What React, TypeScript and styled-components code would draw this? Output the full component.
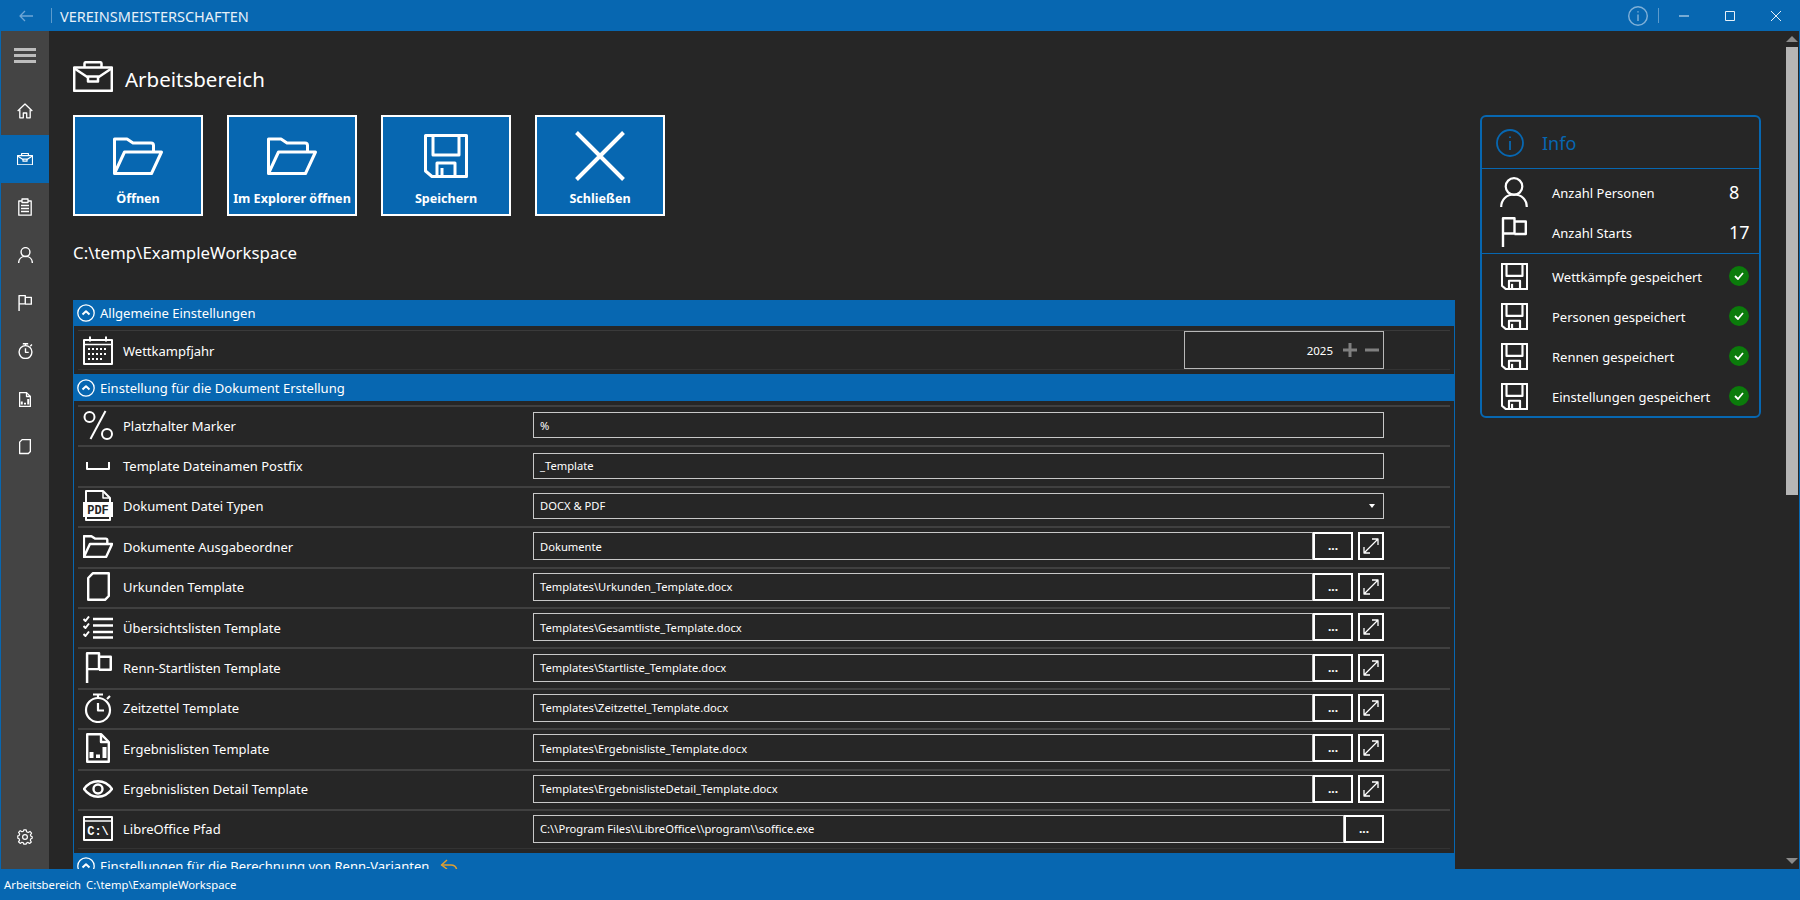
import React from 'react';
import styled, { createGlobalStyle } from 'styled-components';

const blue = '#0767b1';
const font = '"Noto Sans", "Open Sans", sans-serif';

const Global = createGlobalStyle`
  html, body { margin: 0; padding: 0; height: 100%; background: #262626; overflow: hidden; }
  * { box-sizing: border-box; }
  #root { height: 100%; }
`;

const Svg = styled.svg`
  display: block;
  flex-shrink: 0;
  fill: none;
  stroke: currentColor;
  stroke-linejoin: round;
`;

type IconProps = { w?: number; sw?: number };

const BriefcaseIcon = ({ w = 40, sw = 2.5 }: IconProps) => (
  <Svg width={w} height={(w * 31) / 40} viewBox="0 0 40 31" strokeWidth={sw}>
    <path d="M1.2 6.5H38.8V29.8H1.2Z" />
    <path d="M11.5 6V2.5Q11.5 1.2 13 1.2H27Q28.5 1.2 28.5 2.5V6" />
    <path d="M1.5 7.5L15 16.5M38.5 7.5L25 16.5" />
    <path d="M15 15.5H25V20.5H15Z" />
  </Svg>
);
const FolderIcon = ({ w = 50, sw = 3 }: IconProps) => (
  <Svg width={w} height={(w * 38) / 50} viewBox="0 0 50 38" strokeWidth={sw}>
    <path d="M1.5 36.5V2H14L20 6H38Q40.5 6 40.5 8.5V15" />
    <path d="M1.5 36.5L11.5 15H48.5L38.5 36.5Z" />
  </Svg>
);
const SaveIcon = ({ w = 44, sw = 3 }: IconProps) => (
  <Svg width={w} height={w} viewBox="0 0 44 44" strokeWidth={sw}>
    <path d="M1.5 1.5H42.5V42.5H8L1.5 37Z" />
    <path d="M9 1.5V21H35V1.5" />
    <path d="M13 42.5V29H31V42.5" />
    <path d="M18 34V42" />
  </Svg>
);
const CloseIcon = ({ w = 50, sw = 4 }: IconProps) => (
  <Svg width={w} height={w} viewBox="0 0 50 50" strokeWidth={sw}>
    <path d="M1.5 1.5L48.5 48.5M48.5 1.5L1.5 48.5" />
  </Svg>
);
const InfoIcon = ({ w = 28, sw = 1.8 }: IconProps) => (
  <Svg width={w} height={w} viewBox="0 0 28 28" strokeWidth={sw}>
    <circle cx="14" cy="14" r="13" />
    <path d="M14 12V21" />
    <path d="M14 7.5V9" />
  </Svg>
);
const PersonIcon = ({ w = 28, sw = 2.2 }: IconProps) => (
  <Svg width={w} height={(w * 30) / 28} viewBox="0 0 28 30" strokeWidth={sw}>
    <circle cx="14" cy="9.5" r="8.3" />
    <path d="M1.2 30C1.2 22.5 6.5 17.5 14 17.5S26.8 22.5 26.8 30" />
  </Svg>
);
const FlagIcon = ({ w = 27, sw = 2.4 }: IconProps) => (
  <Svg width={w} height={(w * 30) / 26} viewBox="0 0 26 30" strokeWidth={sw}>
    <path d="M2 30V1.2H13.5V16.5H2" />
    <path d="M13.5 4.5H24.8V17H13.5" />
  </Svg>
);
const TimerIcon = ({ w = 28, sw = 2.2 }: IconProps) => (
  <Svg width={w} height={(w * 30) / 28} viewBox="0 0 28 30" strokeWidth={sw}>
    <circle cx="14" cy="17" r="12" />
    <path d="M9 1.5H19M14 1.5V5M23 6L26 3" />
    <path d="M14 10V17.5H20" />
  </Svg>
);
const ReportIcon = ({ w = 24, sw = 2.4 }: IconProps) => (
  <Svg width={w} height={(w * 30) / 24} viewBox="0 0 24 30" strokeWidth={sw}>
    <path d="M1.2 1.2H15L22.8 9V28.8H1.2Z" />
    <path d="M15 1.2V9H22.8" />
    <path d="M5.5 25V19M12 25V21.5M18.5 25V14" strokeWidth="4" />
  </Svg>
);
const DocIcon = ({ w = 23, sw = 2.4 }: IconProps) => (
  <Svg width={w} height={(w * 29) / 23} viewBox="0 0 23 29" strokeWidth={sw}>
    <path d="M6 1.2H21.8V24L18 27.8H1.2V6Z" />
  </Svg>
);
const HomeIcon = ({ w = 16 }: IconProps) => (
  <Svg width={w} height={w} viewBox="0 0 16 16" strokeWidth={1.3}>
    <path d="M.7 8L8 1L15.3 8" />
    <path d="M2.8 6.5V14.8H6.3V10H9.7V14.8H13.2V6.5" />
  </Svg>
);
const ClipboardIcon = ({ w = 14 }: IconProps) => (
  <Svg width={w} height={(w * 18) / 14} viewBox="0 0 14 18" strokeWidth={1.3}>
    <path d="M4 3H.8V17.2H13.2V3H10" />
    <path d="M4 1H10V4.5H4Z" />
    <path d="M3 7.5H11M3 10.5H11M3 13.5H11" />
  </Svg>
);
const GearIcon = ({ w = 16 }: IconProps) => (
  <Svg width={w} height={w} viewBox="0 0 16 16" strokeWidth={1.2}>
    <circle cx="8" cy="8" r="2.4" />
    <path d="M6.8.8H9.2L9.6 2.8L11.2 3.5L13 2.4L14.6 4.1L13.4 5.8L14 7.3L15.2 7.8V9.3L13.9 9.7L13.3 11.2L14.3 13L12.6 14.5L11 13.4L9.5 14L9.2 15.2H6.8L6.4 13.9L4.9 13.3L3.2 14.4L1.5 12.8L2.6 11.1L2 9.6L.8 9.2V6.9L2.1 6.5L2.7 5L1.6 3.3L3.2 1.7L5 2.8L6.4 2.2Z" />
  </Svg>
);
const CalendarIcon = () => (
  <Svg width={30} height={29} viewBox="0 0 30 29" strokeWidth={2}>
    <path d="M1 4H29V28H1Z" />
    <path d="M1 8.5H29" strokeWidth="1.5" />
    <path d="M7 .5V5.5M23 .5V5.5" />
    <path d="M5 13H25M5 18H25M5 23H20" strokeWidth="2" strokeDasharray="2 2" />
  </Svg>
);
const PercentIcon = () => (
  <Svg width={30} height={30} viewBox="0 0 30 30" strokeWidth={2}>
    <circle cx="6.5" cy="7" r="5" />
    <circle cx="24" cy="24" r="5" />
    <path d="M22.5 1L7.5 29" />
  </Svg>
);
const SpaceIcon = () => (
  <Svg width={24} height={8} viewBox="0 0 24 8" strokeWidth={2}>
    <path d="M1 0V7H23V0" />
  </Svg>
);
const Mark = styled.text`
  fill: currentColor;
  stroke: none;
  font-family: "Liberation Mono", monospace;
  font-weight: 700;
`;
const PdfMark = styled(Mark)`
  fill: #262626;
`;
const PdfIcon = () => (
  <Svg width={30} height={31} viewBox="0 0 30 31" strokeWidth={2}>
    <path d="M3 13V1H20L27 8V13" />
    <path d="M20 1V8H27" strokeWidth="1.5" />
    <path d="M3 26V30H27V26" />
    <path d="M.5 13H29.5V26H.5Z" fill="currentColor" />
    <PdfMark x="15" y="23.5" textAnchor="middle" fontSize="12">PDF</PdfMark>
  </Svg>
);
const ListIcon = () => (
  <Svg width={30} height={23} viewBox="0 0 30 23" strokeWidth={2.4}>
    <path d="M10 3H30M10 9.5H30M10 16H30M10 21.5H30" />
    <path d="M.5 3L2.5 5L6 .5M.5 10L2.5 12L6 7.5M.5 18L2.5 20L6 15.5" strokeWidth="2" />
  </Svg>
);
const EyeIcon = () => (
  <Svg width={30} height={18} viewBox="0 0 30 18" strokeWidth={2.4}>
    <path d="M1 9C5 3.5 9.5 1.3 15 1.3S25 3.5 29 9C25 14.5 20.5 16.7 15 16.7S5 14.5 1 9Z" />
    <circle cx="15" cy="9" r="4.5" />
  </Svg>
);
const TerminalIcon = () => (
  <Svg width={30} height={25} viewBox="0 0 30 25" strokeWidth={2}>
    <path d="M1 1H29V24H1Z" />
    <path d="M1 5H29" strokeWidth="1.5" />
    <Mark x="15" y="19" textAnchor="middle" fontSize="12">C:\</Mark>
  </Svg>
);
const ChevronCircle = () => (
  <Svg width={18} height={18} viewBox="0 0 18 18" strokeWidth={1.3}>
    <circle cx="9" cy="9" r="8.2" />
    <path d="M5.5 10.5L9 7.2L12.5 10.5" strokeWidth="2" />
  </Svg>
);
const ExpandIcon = () => (
  <Svg width={16} height={16} viewBox="0 0 16 16" strokeWidth={1.3}>
    <path d="M1 15L15 1M9 1H15V7M1 9V15H7" />
  </Svg>
);
const UndoIcon = () => (
  <Svg width={18} height={14} viewBox="0 0 18 14" strokeWidth={1.5}>
    <path d="M7 1L1.5 6L7 10" />
    <path d="M1.5 6H11C15 6 17 9 17 13.5" />
  </Svg>
);

const Page = styled.div`
  display: flex;
  flex-direction: column;
  height: 900px;
  overflow: hidden;
  font-family: ${font};
  color: #fff;
  background: ${blue};
`;

const TitleBar = styled.div`
  display: flex;
  align-items: center;
  flex: 0 0 31px;
  padding: 0 1px 0 19px;
  background: ${blue};
`;
const BackButton = styled.div`
  display: flex;
  color: #6ea6d6;
`;
const TitleDivider = styled.div<{ $left: number; $right: number }>`
  width: 1px;
  height: 15px;
  margin: 0 ${({ $right }) => $right}px 0 ${({ $left }) => $left}px;
  background: #5c9bcd;
`;
const TitleText = styled.div`
  font-size: 14.5px;
  color: #e6f0f8;
`;
const WindowControls = styled.div`
  display: flex;
  align-items: center;
  margin-left: auto;
`;
const HelpButton = styled.div`
  display: flex;
  color: #7fb0d8;
`;
const ControlButton = styled.div`
  display: flex;
  align-items: center;
  justify-content: center;
  width: 46px;
  height: 31px;
  color: #e6f0f8;
`;

const Middle = styled.div`
  display: flex;
  flex: 1;
  min-height: 0;
  padding: 0 1px;
  background: ${blue};
`;

const Sidebar = styled.nav`
  display: flex;
  flex-direction: column;
  flex: 0 0 48px;
  background: #444;
`;
const MenuButton = styled.div`
  display: flex;
  flex-direction: column;
  gap: 3px;
  height: 56px;
  padding: 17px 13px 0;
`;
const MenuLine = styled.div`
  height: 3px;
  background: #bdbdbd;
`;
const NavItem = styled.div<{ $active?: boolean }>`
  display: flex;
  align-items: center;
  justify-content: center;
  height: 48px;
  background: ${({ $active }) => ($active ? blue : 'transparent')};
`;
const NavFooter = styled(NavItem)`
  margin-top: auto;
  margin-bottom: 8px;
`;

const Main = styled.main`
  display: flex;
  flex: 1;
  min-width: 0;
  overflow: hidden;
  background: #262626;
`;
const Content = styled.div`
  flex: 0 0 1382px;
  margin-left: 24px;
  padding-top: 30px;
`;
const Heading = styled.div`
  display: flex;
  align-items: center;
  gap: 12px;
  height: 31px;
`;
const HeadingText = styled.div`
  font-size: 20.5px;
  margin-top: 5px;
`;
const ActionRow = styled.div`
  display: flex;
  gap: 24px;
  margin-top: 23px;
`;
const ActionButton = styled.button`
  position: relative;
  display: flex;
  flex-direction: column;
  align-items: center;
  width: 130px;
  height: 101px;
  padding: 0;
  border: 2px solid #fff;
  background: ${blue};
  color: #fff;
  font-family: ${font};
`;
const ActionIconBox = styled.div`
  display: flex;
  align-items: center;
  justify-content: center;
  height: 72px;
  padding-top: 6px;
`;
const ActionLabel = styled.div`
  font-size: 12.6px;
  font-weight: 700;
  white-space: nowrap;
  line-height: 20px;
`;
const PathText = styled.div`
  margin-top: 26px;
  font-size: 16.85px;
  line-height: 22px;
`;

const Section = styled.section`
  margin-top: 36px;
`;
const SectionNext = styled.section``;
const SectionHeader = styled.div<{ $h?: number }>`
  display: flex;
  align-items: center;
  gap: 5px;
  height: ${({ $h }) => $h ?? 26}px;
  padding-left: 4px;
  background: ${blue};
  font-size: 13.05px;
`;
const UndoMark = styled.span`
  display: flex;
  margin-left: 6px;
  color: #e0a030;
`;
const SectionBody = styled.div`
  padding: 4px 4px;
  border-left: 1px solid ${blue};
  border-right: 1px solid ${blue};
`;
const Row = styled.div`
  display: grid;
  grid-template-columns: 45px 410px 851px;
  align-items: center;
  height: 40.4px;
  padding-bottom: 2px;
  border-top: 2px solid #404040;
`;
const PlainRow = styled(Row)`
  height: 40px;
  padding-bottom: 0;
  border-top: 1px solid #3a3a3a;
  border-bottom: 1px solid #333;
`;
const LastRow = styled(Row)`
  height: 40px;
  padding-bottom: 1px;
  border-bottom: 1px solid #333;
`;
const IconCell = styled.div`
  display: flex;
  align-items: center;
  justify-content: center;
  width: 30px;
  margin-left: 5px;
`;
const RowLabel = styled.div`
  margin-top: 1px;
  font-size: 13px;
`;
const Field = styled.div`
  display: flex;
  align-items: center;
  flex: 1;
  height: 100%;
  padding: 0 6px;
  border: 1px solid #c8c8c8;
  font-size: 11.2px;
`;
const FieldRow = styled.div<{ $h?: number }>`
  display: flex;
  height: ${({ $h }) => $h ?? 26}px;
`;
const YearCell = styled.div`
  display: flex;
  justify-content: flex-end;
  align-self: stretch;
`;
const YearBox = styled.div`
  display: flex;
  align-items: center;
  justify-content: flex-end;
  width: 200px;
  gap: 10px;
  padding-right: 4px;
  border: 1px solid #b8b8b8;
  font-size: 11.5px;
`;
const Stepper = styled.div`
  display: flex;
  gap: 8px;
  color: #808080;
`;
const ComboArrow = styled.div`
  width: 0;
  height: 0;
  margin-left: auto;
  margin-right: 2px;
  border-left: 3.5px solid transparent;
  border-right: 3.5px solid transparent;
  border-top: 4px solid #fff;
`;
const DotsButton = styled.div`
  display: flex;
  align-items: flex-end;
  justify-content: center;
  flex: 0 0 40px;
  padding-bottom: 4px;
  border: 2px solid #fff;
  font-size: 12px;
  line-height: 16px;
  font-weight: 700;
`;
const ExpandButton = styled.div`
  display: flex;
  align-items: center;
  justify-content: center;
  flex: 0 0 26px;
  margin-left: 5px;
  border: 2px solid #fff;
`;

const InfoPanel = styled.aside`
  flex: 0 0 281px;
  min-width: 0;
  height: 303px;
  margin: 84px 0 0 25px;
  border: 2px solid ${blue};
  border-radius: 6px;
`;
const InfoHeader = styled.div`
  display: flex;
  align-items: center;
  height: 52px;
  padding-left: 14px;
  color: ${blue};
  border-bottom: 1px solid ${blue};
`;
const InfoTitle = styled.div`
  margin-left: 18px;
  font-size: 18px;
`;
const InfoGroup = styled.div`
  padding-top: 3px;
  height: 85px;
  border-bottom: 1px solid ${blue};
`;
const InfoGroupLast = styled.div`
  padding-top: 2px;
`;
const InfoRow = styled.div`
  display: grid;
  grid-template-columns: 52px 177px 1fr;
  align-items: center;
  height: 40px;
  padding-left: 18px;
  font-size: 13px;
`;
const InfoRowIcon = styled.div`
  display: flex;
  justify-content: center;
  width: 28px;
`;
const InfoLabel = styled.div`
  padding-top: 2px;
`;
const InfoValue = styled.div`
  font-size: 18px;
`;
const CheckBadge = styled.div`
  display: flex;
  align-items: center;
  justify-content: center;
  width: 20px;
  height: 20px;
  border-radius: 50%;
  background: #0b7b0b;
`;

const Scrollbar = styled.div`
  display: flex;
  flex-direction: column;
  align-items: center;
  flex: 0 0 12px;
  margin-left: auto;
  margin-right: 1px;
  padding: 5px 0;
`;
const ScrollArrow = styled.div<{ $down?: boolean }>`
  width: 0;
  height: 0;
  border-left: 6px solid transparent;
  border-right: 6px solid transparent;
  ${({ $down }) => ($down ? 'border-top: 6px solid #8a8a8a;' : 'border-bottom: 6px solid #8a8a8a;')}
`;
const ScrollThumb = styled.div`
  width: 12px;
  height: 448px;
  margin-top: 5px;
  background: #b5b5b5;
`;
const ScrollSpacer = styled.div`
  flex: 1;
`;

const StatusBar = styled.div`
  display: flex;
  align-items: center;
  gap: 5px;
  flex: 0 0 31px;
  padding-left: 4px;
  background: ${blue};
  font-size: 11.3px;
`;

const actions = [
  { label: 'Öffnen', icon: <FolderIcon /> },
  { label: 'Im Explorer öffnen', icon: <FolderIcon /> },
  { label: 'Speichern', icon: <SaveIcon /> },
  { label: 'Schließen', icon: <CloseIcon /> },
];

const navIcons = [
  <HomeIcon />,
  <BriefcaseIcon w={16} sw={3} />,
  <ClipboardIcon />,
  <PersonIcon w={15} sw={2.6} />,
  <FlagIcon w={14} sw={2.6} />,
  <TimerIcon w={15} sw={2.6} />,
  <ReportIcon w={12} sw={2.6} />,
  <DocIcon w={12} sw={2.6} />,
];

const templates = [
  { label: 'Dokumente Ausgabeordner', value: 'Dokumente', icon: <FolderIcon w={30} sw={4} /> },
  { label: 'Urkunden Template', value: 'Templates\\Urkunden_Template.docx', icon: <DocIcon /> },
  { label: 'Übersichtslisten Template', value: 'Templates\\Gesamtliste_Template.docx', icon: <ListIcon /> },
  { label: 'Renn-Startlisten Template', value: 'Templates\\Startliste_Template.docx', icon: <FlagIcon /> },
  { label: 'Zeitzettel Template', value: 'Templates\\Zeitzettel_Template.docx', icon: <TimerIcon /> },
  { label: 'Ergebnislisten Template', value: 'Templates\\Ergebnisliste_Template.docx', icon: <ReportIcon /> },
  { label: 'Ergebnislisten Detail Template', value: 'Templates\\ErgebnislisteDetail_Template.docx', icon: <EyeIcon /> },
];

const saved = ['Wettkämpfe gespeichert', 'Personen gespeichert', 'Rennen gespeichert', 'Einstellungen gespeichert'];

export default function App() {
  return (
    <Page>
      <Global />
      <TitleBar>
        <BackButton>
          <Svg width={14} height={12} viewBox="0 0 14 12" strokeWidth={1.3}>
            <path d="M14 6H1M6 1L1 6L6 11" />
          </Svg>
        </BackButton>
        <TitleDivider $left={18} $right={8} />
        <TitleText>VEREINSMEISTERSCHAFTEN</TitleText>
        <WindowControls>
          <HelpButton>
            <InfoIcon w={20} sw={2} />
          </HelpButton>
          <TitleDivider $left={10} $right={2} />
          <ControlButton>
            <Svg width={10} height={2} viewBox="0 0 10 2" strokeWidth={1}>
              <path d="M0 1H10" />
            </Svg>
          </ControlButton>
          <ControlButton>
            <Svg width={10} height={10} viewBox="0 0 10 10" strokeWidth={1}>
              <path d="M.5 .5H9.5V9.5H.5Z" />
            </Svg>
          </ControlButton>
          <ControlButton>
            <Svg width={10} height={10} viewBox="0 0 10 10" strokeWidth={1}>
              <path d="M0 0L10 10M10 0L0 10" />
            </Svg>
          </ControlButton>
        </WindowControls>
      </TitleBar>
      <Middle>
        <Sidebar>
          <MenuButton>
            <MenuLine />
            <MenuLine />
            <MenuLine />
          </MenuButton>
          {navIcons.map((icon, index) => (
            <NavItem key={index} $active={index === 1}>
              {icon}
            </NavItem>
          ))}
          <NavFooter>
            <GearIcon />
          </NavFooter>
        </Sidebar>
        <Main>
          <Content>
            <Heading>
              <BriefcaseIcon />
              <HeadingText>Arbeitsbereich</HeadingText>
            </Heading>
            <ActionRow>
              {actions.map(({ label, icon }) => (
                <ActionButton key={label}>
                  <ActionIconBox>{icon}</ActionIconBox>
                  <ActionLabel>{label}</ActionLabel>
                </ActionButton>
              ))}
            </ActionRow>
            <PathText>C:\temp\ExampleWorkspace</PathText>

            <Section>
              <SectionHeader>
                <ChevronCircle />
                Allgemeine Einstellungen
              </SectionHeader>
              <SectionBody>
                <PlainRow>
                  <IconCell>
                    <CalendarIcon />
                  </IconCell>
                  <RowLabel>Wettkampfjahr</RowLabel>
                  <YearCell>
                    <YearBox>
                      2025
                      <Stepper>
                        <Svg width={14} height={14} viewBox="0 0 14 14" strokeWidth={3}>
                          <path d="M0 7H14M7 0V14" />
                        </Svg>
                        <Svg width={14} height={14} viewBox="0 0 14 14" strokeWidth={3}>
                          <path d="M0 7H14" />
                        </Svg>
                      </Stepper>
                    </YearBox>
                  </YearCell>
                </PlainRow>
              </SectionBody>
            </Section>

            <SectionNext>
              <SectionHeader $h={27}>
                <ChevronCircle />
                Einstellung für die Dokument Erstellung
              </SectionHeader>
              <SectionBody>
                <Row>
                  <IconCell>
                    <PercentIcon />
                  </IconCell>
                  <RowLabel>Platzhalter Marker</RowLabel>
                  <FieldRow>
                    <Field>%</Field>
                  </FieldRow>
                </Row>
                <Row>
                  <IconCell>
                    <SpaceIcon />
                  </IconCell>
                  <RowLabel>Template Dateinamen Postfix</RowLabel>
                  <FieldRow>
                    <Field>_Template</Field>
                  </FieldRow>
                </Row>
                <Row>
                  <IconCell>
                    <PdfIcon />
                  </IconCell>
                  <RowLabel>Dokument Datei Typen</RowLabel>
                  <FieldRow>
                    <Field>
                      DOCX &amp; PDF
                      <ComboArrow />
                    </Field>
                  </FieldRow>
                </Row>
                {templates.map(({ label, value, icon }) => (
                  <Row key={label}>
                    <IconCell>{icon}</IconCell>
                    <RowLabel>{label}</RowLabel>
                    <FieldRow $h={28}>
                      <Field>{value}</Field>
                      <DotsButton>...</DotsButton>
                      <ExpandButton>
                        <ExpandIcon />
                      </ExpandButton>
                    </FieldRow>
                  </Row>
                ))}
                <LastRow>
                  <IconCell>
                    <TerminalIcon />
                  </IconCell>
                  <RowLabel>LibreOffice Pfad</RowLabel>
                  <FieldRow $h={28}>
                    <Field>C:\\Program Files\\LibreOffice\\program\\soffice.exe</Field>
                    <DotsButton>...</DotsButton>
                  </FieldRow>
                </LastRow>
              </SectionBody>
            </SectionNext>

            <SectionNext>
              <SectionHeader>
                <ChevronCircle />
                Einstellungen für die Berechnung von Renn-Varianten
                <UndoMark>
                  <UndoIcon />
                </UndoMark>
              </SectionHeader>
            </SectionNext>
          </Content>

          <InfoPanel>
            <InfoHeader>
              <InfoIcon />
              <InfoTitle>Info</InfoTitle>
            </InfoHeader>
            <InfoGroup>
              <InfoRow>
                <InfoRowIcon>
                  <PersonIcon />
                </InfoRowIcon>
                <InfoLabel>Anzahl Personen</InfoLabel>
                <InfoValue>8</InfoValue>
              </InfoRow>
              <InfoRow>
                <InfoRowIcon>
                  <FlagIcon w={26} />
                </InfoRowIcon>
                <InfoLabel>Anzahl Starts</InfoLabel>
                <InfoValue>17</InfoValue>
              </InfoRow>
            </InfoGroup>
            <InfoGroupLast>
              {saved.map(label => (
                <InfoRow key={label}>
                  <InfoRowIcon>
                    <SaveIcon w={27} sw={3.5} />
                  </InfoRowIcon>
                  <InfoLabel>{label}</InfoLabel>
                  <CheckBadge>
                    <Svg width={10} height={8} viewBox="0 0 10 8" strokeWidth={1.8}>
                      <path d="M1 4L4 7L9 1" />
                    </Svg>
                  </CheckBadge>
                </InfoRow>
              ))}
            </InfoGroupLast>
          </InfoPanel>

          <Scrollbar>
            <ScrollArrow />
            <ScrollThumb />
            <ScrollSpacer />
            <ScrollArrow $down />
          </Scrollbar>
        </Main>
      </Middle>
      <StatusBar>
        <span>Arbeitsbereich</span>
        <span>C:\temp\ExampleWorkspace</span>
      </StatusBar>
    </Page>
  );
}
